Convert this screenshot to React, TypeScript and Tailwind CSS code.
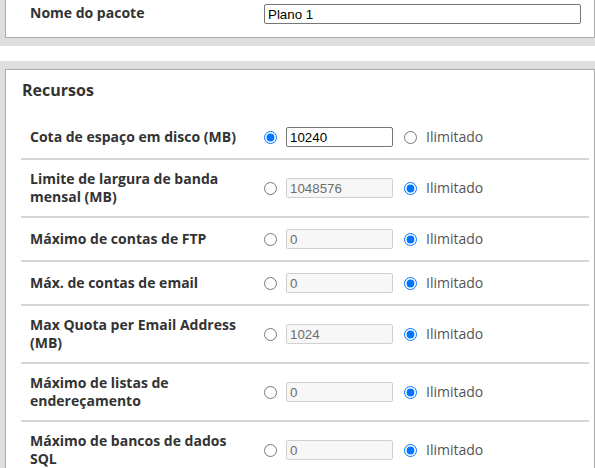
import type { ReactNode } from "react";

type Resource = {
  label: ReactNode;
  value: string;
  unlimited: boolean;
};

const resources: Resource[] = [
  { label: "Cota de espaço em disco (MB)", value: "10240", unlimited: false },
  { label: "Limite de largura de banda mensal (MB)", value: "1048576", unlimited: true },
  { label: "Máximo de contas de FTP", value: "0", unlimited: true },
  { label: "Máx. de contas de email", value: "0", unlimited: true },
  { label: "Max Quota per Email Address (MB)", value: "1024", unlimited: true },
  { label: "Máximo de listas de endereçamento", value: "0", unlimited: true },
  { label: "Máximo de bancos de dados SQL", value: "0", unlimited: true },
];

function ResourceRow({ item, index }: { item: Resource; index: number }) {
  return (
    <div className="flex min-h-[44px] items-center border-b-2 border-[#d6d6d6]">
      <div className="w-[241px] shrink-0 py-[10px] pl-[9px] pr-[10px] text-[14px] font-bold leading-[18px] text-[#333]">
        {item.label}
      </div>
      <div className="flex items-center pl-[2px]">
        <input
          type="radio"
          name={`r${index}`}
          defaultChecked={!item.unlimited}
          className="m-0 h-[13px] w-[13px]"
        />
        <input
          type="text"
          defaultValue={item.value}
          disabled={item.unlimited}
          className={
            item.unlimited
              ? "ml-[9px] h-[20px] w-[107px] rounded-[2px] border border-[#d0d0d0] bg-[#f7f7f7] px-[3px] font-['Liberation_Sans',sans-serif] text-[13.33px] text-[#6d6d6d]"
              : "ml-[9px] h-[20px] w-[107px] rounded-[2px] border border-[#767676] bg-white px-[3px] font-['Liberation_Sans',sans-serif] text-[13.33px] text-black"
          }
        />
        <input
          type="radio"
          name={`r${index}`}
          defaultChecked={item.unlimited}
          className="m-0 ml-[11px] h-[13px] w-[13px]"
        />
        <span className="ml-[9px] text-[14px] leading-[18px] text-[#555]">Ilimitado</span>
      </div>
    </div>
  );
}

export default function App() {
  return (
    <div className="h-[468px] w-[595px] overflow-hidden bg-white font-['Open_Sans',sans-serif]">
      {/* Package name panel */}
      <div className="bg-[#dedede] pb-[8px] pl-[5px]">
        <div className="h-[38px] border-x border-b border-[#aaa] bg-white pl-[15px] pr-[5px]">
          <div className="flex items-start pt-[4px]">
            <div className="w-[243px] shrink-0 pl-[9px] text-[14px] font-bold leading-[18px] text-[#333]">
              Nome do pacote
            </div>
            <input
              type="text"
              defaultValue="Plano 1"
              className="h-[20px] w-[317px] rounded-[2px] border border-[#767676] bg-white px-[3px] font-['Liberation_Sans',sans-serif] text-[13.33px] text-black"
            />
          </div>
        </div>
      </div>

      <div className="h-[15px]" />

      {/* Resources panel */}
      <div className="bg-[#dedede] pl-[5px] pt-[8px]">
        <div className="border-x border-t border-[#aaa] bg-white pl-[15px] pr-[5px]">
          <h2 className="pl-px pt-[10px] pb-[16px] text-[16px] font-bold leading-[20px] text-[#333]">
            Recursos
          </h2>
          <div>
            {resources.map((item, i) => (
              <ResourceRow key={i} item={item} index={i} />
            ))}
          </div>
        </div>
      </div>
    </div>
  );
}
